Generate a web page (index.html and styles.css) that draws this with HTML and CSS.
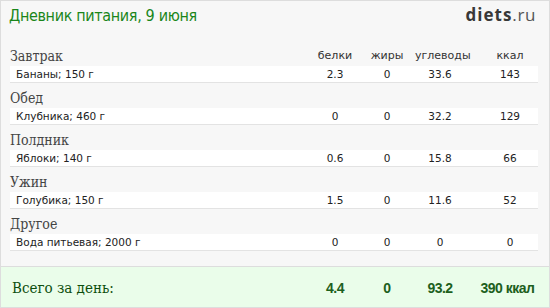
FILE: index.html
```html
<!DOCTYPE html>
<html lang="ru">
<head>
<meta charset="utf-8">
<title>Дневник питания</title>
<link rel="stylesheet" href="styles.css">
</head>
<body>
<div class="card">
  <header class="top">
    <h1 class="title">Дневник питания, 9 июня</h1>
    <div class="logo"><b>diets</b>.ru</div>
  </header>
  <div class="content">
    <section class="meal">
      <div class="meal-head grid">
        <h2 class="meal-name">Завтрак</h2>
        <span class="label">белки</span><span class="label">жиры</span><span class="label">углеводы</span><span class="label kcal">ккал</span>
      </div>
      <div class="item grid">
        <span class="name">Бананы; 150 г</span><span>2.3</span><span>0</span><span>33.6</span><span class="kcal">143</span>
      </div>
    </section>
    <section class="meal">
      <div class="meal-head grid"><h2 class="meal-name">Обед</h2></div>
      <div class="item grid">
        <span class="name">Клубника; 460 г</span><span>0</span><span>0</span><span>32.2</span><span class="kcal">129</span>
      </div>
    </section>
    <section class="meal">
      <div class="meal-head grid"><h2 class="meal-name">Полдник</h2></div>
      <div class="item grid">
        <span class="name">Яблоки; 140 г</span><span>0.6</span><span>0</span><span>15.8</span><span class="kcal">66</span>
      </div>
    </section>
    <section class="meal">
      <div class="meal-head grid"><h2 class="meal-name">Ужин</h2></div>
      <div class="item grid">
        <span class="name">Голубика; 150 г</span><span>1.5</span><span>0</span><span>11.6</span><span class="kcal">52</span>
      </div>
    </section>
    <section class="meal">
      <div class="meal-head grid"><h2 class="meal-name">Другое</h2></div>
      <div class="item grid">
        <span class="name">Вода питьевая; 2000 г</span><span>0</span><span>0</span><span>0</span><span class="kcal">0</span>
      </div>
    </section>
  </div>
  <footer class="total">
    <div class="grid total-grid">
      <span class="total-label">Всего за день:</span><b>4.4</b><b>0</b><b>93.2</b><b class="total-kcal">390 ккал</b>
    </div>
  </footer>
</div>
</body>
</html>
```
FILE: styles.css
```css
* { box-sizing: border-box; }
html, body { margin: 0; padding: 0; background: #fff; }
.card {
  width: 550px;
  height: 308px;
  border: 1px solid #dddddd;
  background: #f7f7f7;
  display: flex;
  flex-direction: column;
  overflow: hidden;
}
.top {
  display: flex;
  justify-content: space-between;
  align-items: baseline;
  padding: 4px 13px 15px 8px;
}
.title {
  margin: 0;
  font: normal 16px/20px "DejaVu Sans Condensed", "DejaVu Sans", sans-serif;
  font-stretch: semi-condensed;
  letter-spacing: -0.35px;
  color: #1a861a;
}
.logo {
  font: normal 17px/20px "Open Sans", sans-serif;
  color: #555;
  letter-spacing: 0.6px;
}
.logo b { font-weight: 700; color: #383838; letter-spacing: 1px; }
.content { padding: 0 11px 0 9px; }
.grid {
  display: grid;
  grid-template-columns: 1fr 48px 56px 50px 73px;
  text-align: center;
  white-space: nowrap;
}
.grid .kcal { padding-left: 17px; }
.meal-head {
  height: 25px;
  padding-top: 5px;
  line-height: 20px;
}
.meal-name {
  margin: 0;
  text-align: left;
  font: normal 14px/20px "DejaVu Serif Condensed", "DejaVu Serif", serif;
  font-stretch: semi-condensed;
  color: #444;
}
.label {
  font: 11px/20px "DejaVu Sans", sans-serif;
  color: #333;
}
.item {
  height: 17px;
  background: #fff;
  border-bottom: 1px solid #e3e3e3;
  font: 10.5px/16px "DejaVu Sans", sans-serif;
  color: #222;
}
.item .name { text-align: left; padding-left: 6px; }
.total {
  margin-top: 15px;
  border-top: 1px solid #dddddd;
  background: #eafdea;
  height: 41px;
  padding: 2px 11px 0 9px;
}
.total-grid {
  line-height: 39px;
  align-items: baseline;
}
.total-label {
  text-align: left;
  padding-left: 2px;
  font: normal 15px/39px "DejaVu Serif Condensed", "DejaVu Serif", serif;
  font-stretch: semi-condensed;
  color: #0e4f0e;
}
.total-grid b {
  font: bold 14px/39px "Liberation Sans Narrow", "Liberation Sans", sans-serif;
  font-stretch: condensed;
  letter-spacing: -0.5px;
  color: #1d601d;
}
.total-grid .total-kcal { padding-left: 12px; }
```
